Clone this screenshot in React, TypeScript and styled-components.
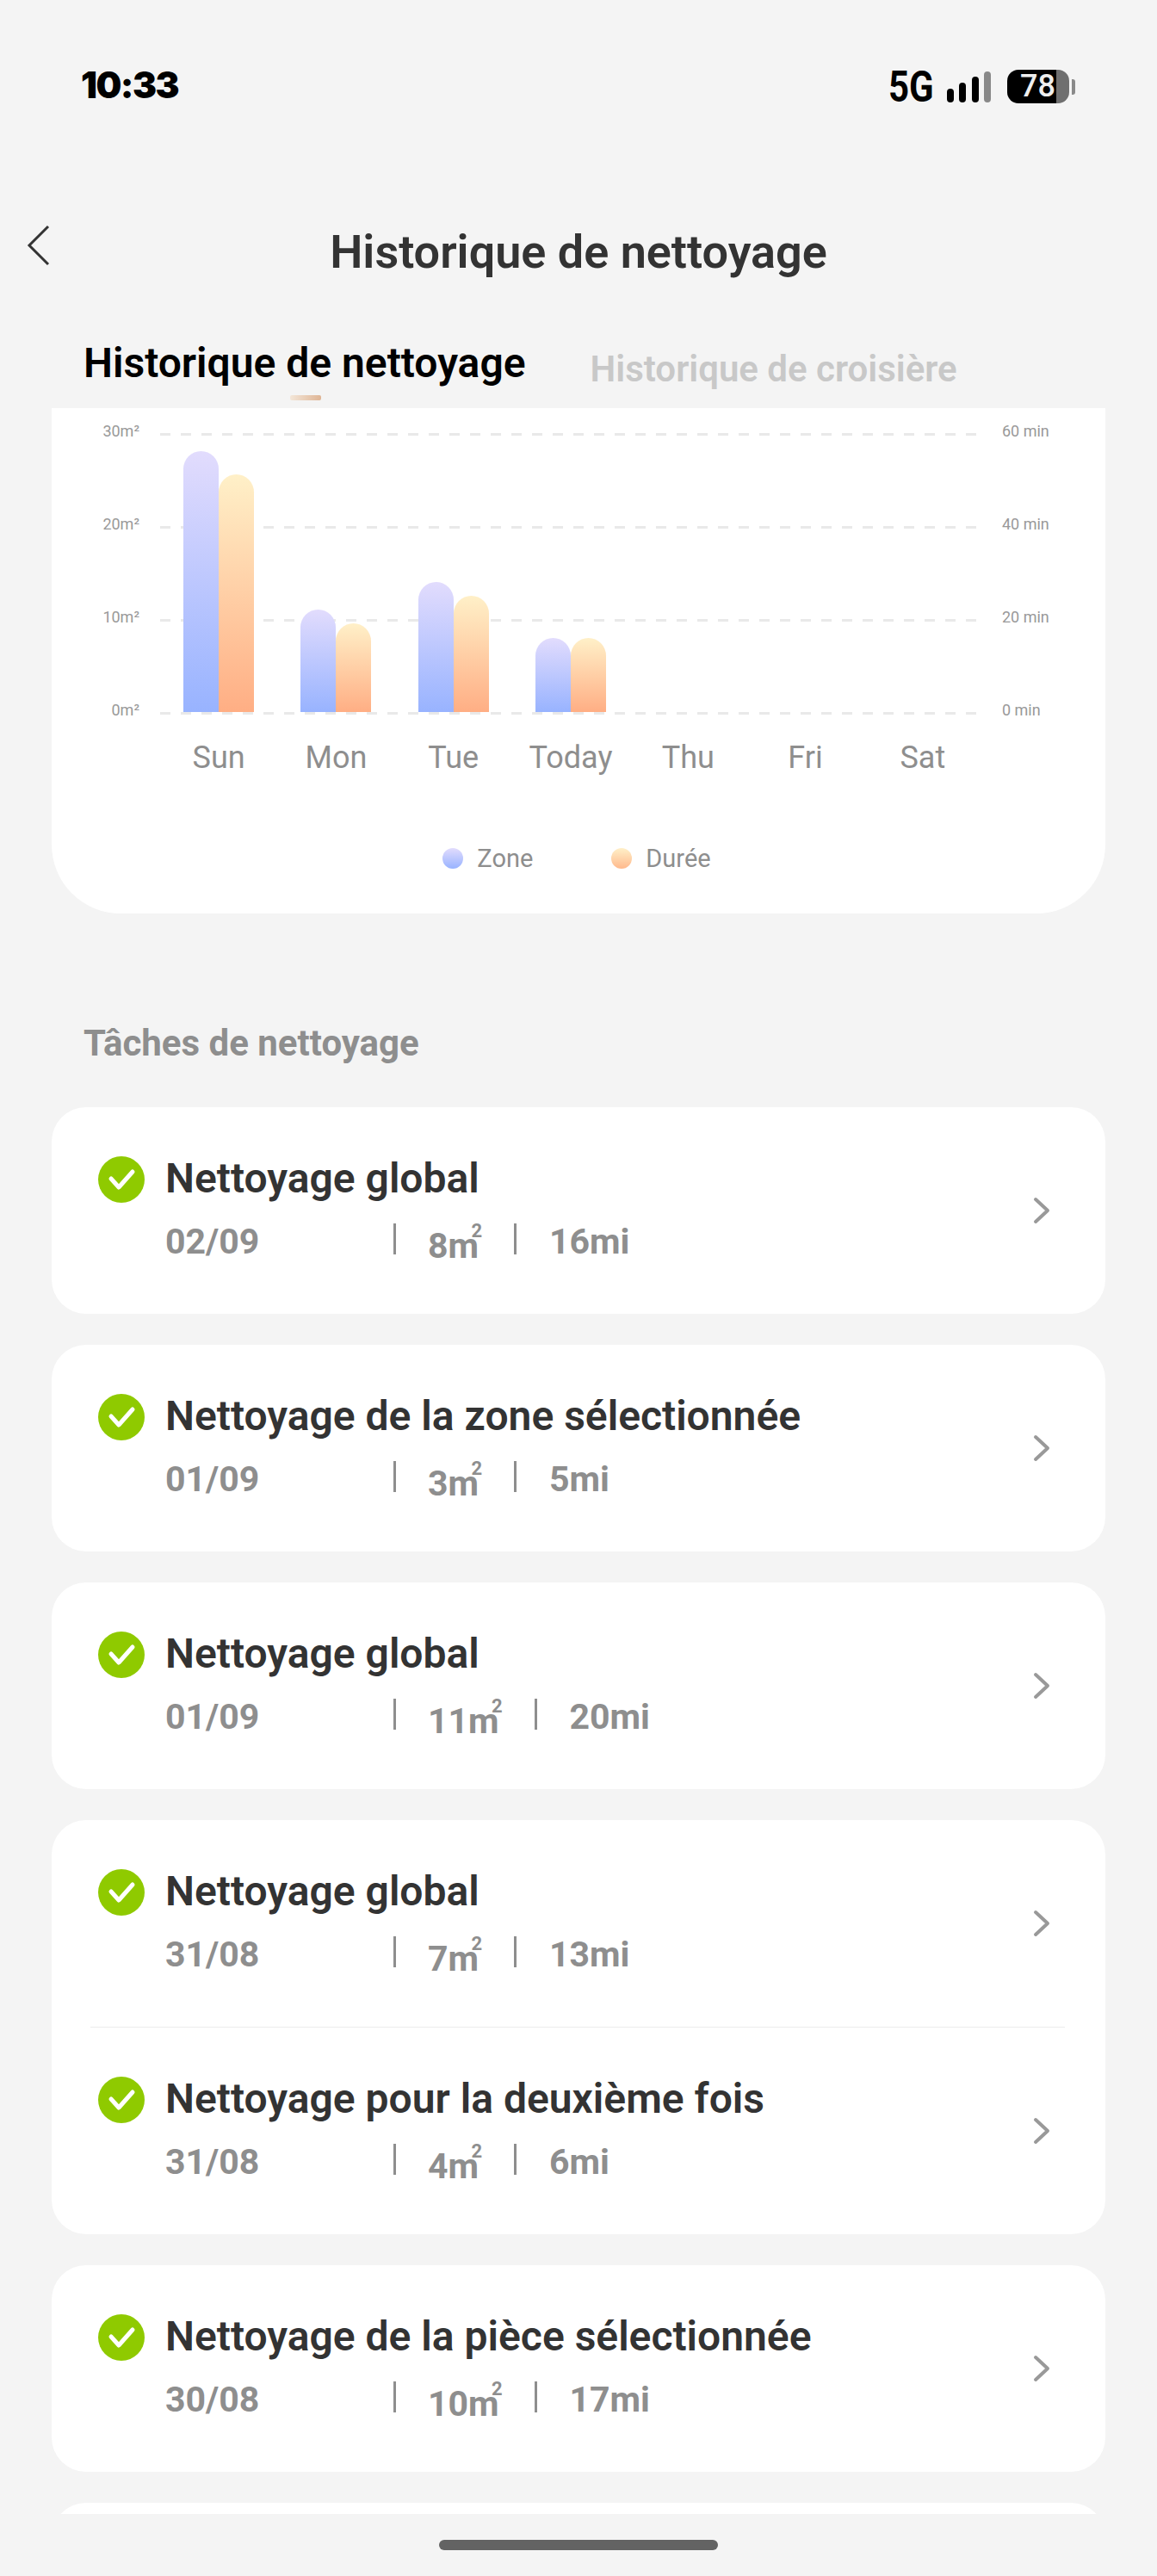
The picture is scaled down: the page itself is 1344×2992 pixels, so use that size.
import styled, { createGlobalStyle } from 'styled-components';

const GlobalStyle = createGlobalStyle`
  html, body {
    margin: 0;
    padding: 0;
    background: #f4f4f4;
  }
  * {
    box-sizing: border-box;
  }
`;

const Page = styled.div`
  width: 1344px;
  height: 2992px;
  display: flex;
  flex-direction: column;
  overflow: hidden;
  background: #f4f4f4;
  font-family: Roboto, sans-serif;
`;

const StatusBar = styled.div`
  height: 160px;
  padding: 81px 95px 0 94px;
  display: flex;
  justify-content: space-between;
  align-items: flex-start;
`;

const Clock = styled.span`
  font-family: Inter, sans-serif;
  font-weight: 900;
  font-size: 42px;
  line-height: 36px;
  letter-spacing: -1.5px;
  color: #000;
`;

const StatusRight = styled.div`
  display: flex;
  align-items: flex-start;
`;

const Network = styled.span`
  width: 50px;
  font-weight: 700;
  font-size: 50px;
  line-height: 40px;
  color: #000;
  transform: scaleX(0.84);
  transform-origin: left center;
`;

const SignalIcon = styled.svg`
  margin: 2px 0 0 18px;
`;

const Battery = styled.div`
  margin-left: 18px;
  width: 72px;
  height: 39px;
  border-radius: 13px;
  background: linear-gradient(90deg, #000 0 57px, #6f6f6f 57px);
  color: #eee;
  font-weight: 500;
  font-size: 36px;
  line-height: 39px;
  padding-left: 15px;
`;

const BatteryTip = styled.div`
  margin: 11px 0 0 3px;
  width: 4px;
  height: 18px;
  border-radius: 0 3px 3px 0;
  background: #8a8a8a;
`;

const Header = styled.div`
  height: 100px;
  margin-top: 80px;
  position: relative;
  display: flex;
  justify-content: center;
  align-items: center;
`;

const BackIcon = styled.svg`
  position: absolute;
  left: 31px;
  top: 21px;
`;

const Title = styled.h1`
  margin: 4px 0 0;
  font-weight: 600;
  font-size: 54px;
  color: #333;
`;

const Tabs = styled.div`
  height: 80px;
  margin-top: 54px;
  padding-left: 97px;
  display: flex;
  align-items: flex-start;
  gap: 75px;
`;

const Tab = styled.div<{ $active?: boolean }>`
  position: relative;
  white-space: nowrap;
  margin-top: ${(p) => (p.$active ? '0' : '7px')};
  font-weight: 600;
  font-size: ${(p) => (p.$active ? '48px' : '42px')};
  line-height: 56px;
  color: ${(p) => (p.$active ? '#000' : '#c8c8c8')};
`;

const Indicator = styled.div`
  position: absolute;
  left: 240px;
  top: 65px;
  width: 36px;
  height: 6px;
  border-radius: 2px;
  background: linear-gradient(90deg, #f3e6d8, #dfb595);
`;

const ChartCard = styled.section`
  margin: 0 60px;
  height: 587px;
  padding-top: 29px;
  background: #fff;
  border-radius: 0 0 80px 80px;
`;

const ChartRow = styled.div`
  display: grid;
  grid-template-columns: 126px 954px 1fr;
`;

const Axis = styled.div<{ $side: 'left' | 'right' }>`
  height: 342px;
  margin-top: -11px;
  display: flex;
  flex-direction: column;
  justify-content: space-between;
  text-align: ${(p) => (p.$side === 'left' ? 'right' : 'left')};
  padding: ${(p) => (p.$side === 'left' ? '0 24px 0 0' : '0 0 0 24px')};
  font-size: 18px;
  line-height: 18px;
  color: #999;
`;

const Plot = styled.div`
  position: relative;
  height: 327px;
`;

const GridLines = styled.div`
  position: absolute;
  inset: 0;
  display: flex;
  flex-direction: column;
  justify-content: space-between;
`;

const GridLine = styled.div`
  height: 3px;
  margin-right: 5px;
  background: repeating-linear-gradient(90deg, #e9e9e9 0 12px, transparent 12px 24px);
`;

const Columns = styled.div`
  display: grid;
  grid-template-columns: repeat(7, 1fr);
`;

const BarColumns = styled(Columns)`
  position: relative;
  height: 324px;
  align-items: end;
`;

const BarPair = styled.div`
  display: flex;
  justify-content: center;
  align-items: flex-end;
`;

const Bar = styled.div<{ $height: number; $kind: 'zone' | 'time' }>`
  width: 41px;
  height: ${(p) => p.$height}px;
  border-radius: 21px 21px 0 0;
  background: ${(p) =>
    p.$kind === 'zone'
      ? 'linear-gradient(180deg, #e2dcfd, #98b3ff)'
      : 'linear-gradient(180deg, #fff0c8, #ffae84)'};
`;

const DayLabels = styled(Columns)`
  margin-top: 25px;
  margin-left: 126px;
  width: 954px;
`;

const DayLabel = styled.div`
  text-align: center;
  font-size: 36px;
  line-height: 42px;
  color: #8e8e8e;
`;

const Legend = styled.div`
  margin-top: 79px;
  display: flex;
  justify-content: center;
  gap: 91px;
  padding-right: 4px;
`;

const LegendItem = styled.div`
  display: flex;
  align-items: center;
  gap: 16px;
  font-size: 29px;
  line-height: 34px;
  color: #8e8e8e;
`;

const LegendDot = styled.span<{ $kind: 'zone' | 'time' }>`
  width: 24px;
  height: 24px;
  border-radius: 50%;
  background: ${(p) =>
    p.$kind === 'zone'
      ? 'linear-gradient(180deg, #e2dcfd, #98b3ff)'
      : 'linear-gradient(180deg, #fff0c8, #ffb98c)'};
`;

const SectionTitle = styled.h2`
  margin: 124px 0 0 97px;
  font-weight: 700;
  font-size: 42px;
  line-height: 54px;
  color: #8e8e8e;
`;

const TaskList = styled.div`
  flex: 0 0 auto;
  height: 1634px;
  margin: 47px 0 0;
  padding: 0 60px;
  display: flex;
  flex-direction: column;
  gap: 36px;
  overflow: hidden;
`;

const TaskCard = styled.div`
  flex: 0 0 auto;
  background: #fff;
  border-radius: 40px;
`;

const TaskRow = styled.div<{ $divided?: boolean }>`
  height: ${(p) => (p.$divided ? '241px' : '240px')};
  padding: 57px 64px 0 54px;
  display: grid;
  grid-template-columns: 54px 1fr 20px;
  column-gap: 24px;
  position: relative;
  ${(p) =>
    p.$divided &&
    `&::after {
      content: '';
      position: absolute;
      left: 45px;
      right: 47px;
      bottom: 0;
      height: 1px;
      background: #ececec;
    }`}
`;

const TaskBody = styled.div`
  display: flex;
  flex-direction: column;
`;

const TaskTitle = styled.div`
  font-weight: 600;
  font-size: 48px;
  line-height: 54px;
  color: #333;
  margin-top: -1px;
`;

const TaskMeta = styled.div`
  margin-top: 22px;
  display: flex;
  align-items: flex-start;
  font-weight: 700;
  font-size: 41px;
  line-height: 48px;
  color: #8e8e8e;
`;

const TaskDate = styled.span`
  width: 265px;
`;

const Divider = styled.span`
  width: 3px;
  height: 36px;
  margin-top: 3px;
  background: #8e8e8e;
`;

const Area = styled.span`
  margin: 5px 41px 0 37px;
  position: relative;
`;

const AreaUnit = styled.sup`
  position: absolute;
  right: -4px;
  top: -5px;
  font-size: 22px;
  line-height: 24px;
  vertical-align: baseline;
`;

const Time = styled.span`
  margin-left: 38px;
`;

const Chevron = styled.svg`
  margin-top: 47px;
`;

const HomeArea = styled.div`
  flex: 1;
  display: flex;
  justify-content: center;
  padding-top: 30px;
`;

const HomeBar = styled.div`
  width: 324px;
  height: 12px;
  border-radius: 6px;
  background: #636363;
`;

type Task = { title: string; date: string; area: string; time: string };

const days = [
  { name: 'Sun', zone: 303, time: 276 },
  { name: 'Mon', zone: 119, time: 103 },
  { name: 'Tue', zone: 151, time: 135 },
  { name: 'Today', zone: 86, time: 86 },
  { name: 'Thu' },
  { name: 'Fri' },
  { name: 'Sat' },
];

const groups: Task[][] = [
  [{ title: 'Nettoyage global', date: '02/09', area: '8m', time: '16mi' }],
  [{ title: 'Nettoyage de la zone sélectionnée', date: '01/09', area: '3m', time: '5mi' }],
  [{ title: 'Nettoyage global', date: '01/09', area: '11m', time: '20mi' }],
  [
    { title: 'Nettoyage global', date: '31/08', area: '7m', time: '13mi' },
    { title: 'Nettoyage pour la deuxième fois', date: '31/08', area: '4m', time: '6mi' },
  ],
  [{ title: 'Nettoyage de la pièce sélectionnée', date: '30/08', area: '10m', time: '17mi' }],
];

function CheckBadge() {
  return (
    <svg width="54" height="54" viewBox="0 0 54 54">
      <circle cx="27" cy="27" r="27" fill="#8fca00" />
      <path
        d="M15 26 L24 36 L40 18"
        fill="none"
        stroke="#fff"
        strokeWidth="5"
        strokeLinecap="round"
        strokeLinejoin="round"
      />
    </svg>
  );
}

function TaskEntry({ task, divided }: { task: Task; divided?: boolean }) {
  return (
    <TaskRow $divided={divided}>
      <CheckBadge />
      <TaskBody>
        <TaskTitle>{task.title}</TaskTitle>
        <TaskMeta>
          <TaskDate>{task.date}</TaskDate>
          <Divider />
          <Area>
            {task.area}
            <AreaUnit>2</AreaUnit>
          </Area>
          <Divider />
          <Time>{task.time}</Time>
        </TaskMeta>
      </TaskBody>
      <Chevron width="20" height="32" viewBox="0 0 20 32">
        <path
          d="M3 3 L17 16 L3 29"
          fill="none"
          stroke="#999"
          strokeWidth="4"
          strokeLinecap="round"
          strokeLinejoin="round"
        />
      </Chevron>
    </TaskRow>
  );
}

export default function App() {
  return (
    <Page>
      <GlobalStyle />
      <StatusBar>
        <Clock>10:33</Clock>
        <StatusRight>
          <Network>5G</Network>
          <SignalIcon width="52" height="38" viewBox="0 0 52 38">
            <rect x="0" y="20" width="8" height="16" rx="4" fill="#000" />
            <rect x="14" y="13" width="8" height="23" rx="4" fill="#000" />
            <rect x="29" y="6" width="8" height="30" rx="4" fill="#000" />
            <rect x="43" y="0" width="8" height="36" rx="4" fill="#888" />
          </SignalIcon>
          <Battery>78</Battery>
          <BatteryTip />
        </StatusRight>
      </StatusBar>

      <Header>
        <BackIcon width="28" height="48" viewBox="0 0 28 48">
          <path d="M25 2 L3 24 L25 46" fill="none" stroke="#333" strokeWidth="3" />
        </BackIcon>
        <Title>Historique de nettoyage</Title>
      </Header>

      <Tabs>
        <Tab $active>
          Historique de nettoyage
          <Indicator />
        </Tab>
        <Tab>Historique de croisière</Tab>
      </Tabs>

      <ChartCard>
        <ChartRow>
          <Axis $side="left">
            <span>30m²</span>
            <span>20m²</span>
            <span>10m²</span>
            <span>0m²</span>
          </Axis>
          <Plot>
            <GridLines>
              <GridLine />
              <GridLine />
              <GridLine />
              <GridLine />
            </GridLines>
            <BarColumns>
              {days.map((d) => (
                <BarPair key={d.name}>
                  {d.zone && <Bar $kind="zone" $height={d.zone} />}
                  {d.time && <Bar $kind="time" $height={d.time} />}
                </BarPair>
              ))}
            </BarColumns>
          </Plot>
          <Axis $side="right">
            <span>60 min</span>
            <span>40 min</span>
            <span>20 min</span>
            <span>0 min</span>
          </Axis>
        </ChartRow>
        <DayLabels>
          {days.map((d) => (
            <DayLabel key={d.name}>{d.name}</DayLabel>
          ))}
        </DayLabels>
        <Legend>
          <LegendItem>
            <LegendDot $kind="zone" />
            Zone
          </LegendItem>
          <LegendItem>
            <LegendDot $kind="time" />
            Durée
          </LegendItem>
        </Legend>
      </ChartCard>

      <SectionTitle>Tâches de nettoyage</SectionTitle>

      <TaskList>
        {groups.map((group, i) => (
          <TaskCard key={i}>
            {group.map((task, j) => (
              <TaskEntry key={j} task={task} divided={j < group.length - 1} />
            ))}
          </TaskCard>
        ))}
        <TaskCard>
          <TaskRow />
        </TaskCard>
      </TaskList>

      <HomeArea>
        <HomeBar />
      </HomeArea>
    </Page>
  );
}
